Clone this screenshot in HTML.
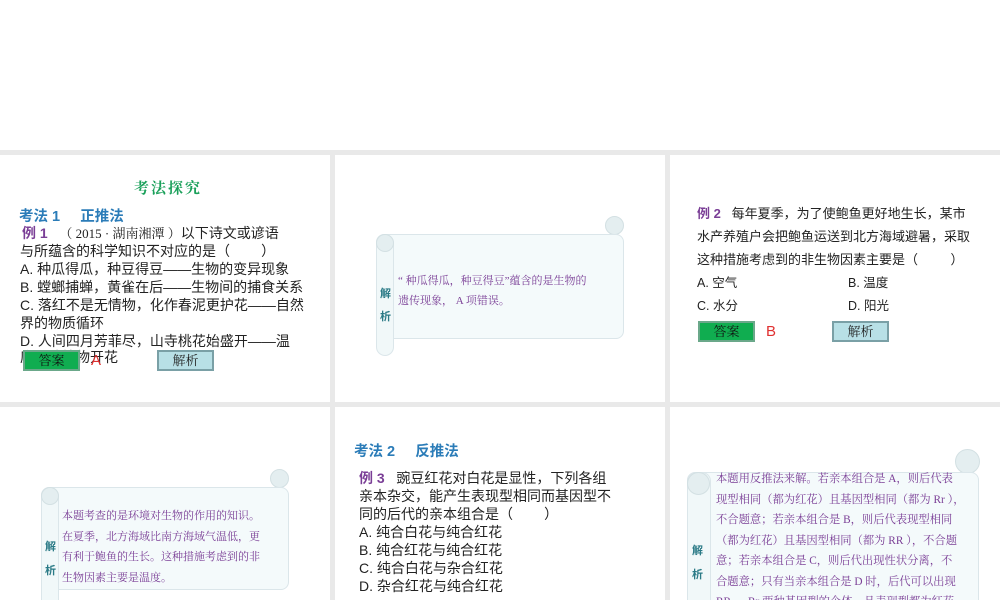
<!DOCTYPE html>
<html><head><meta charset="utf-8"><style>
*{margin:0;padding:0;box-sizing:border-box}
html,body{width:1000px;height:600px;overflow:hidden}
body{background:#fff;position:relative;font-family:"Liberation Sans","Noto Sans CJK SC",sans-serif}
.g{position:absolute;background:#e9e9e9}
.p{position:absolute;overflow:hidden;background:#fff}
.t{position:absolute;font-size:14px;color:#222;line-height:18.5px;white-space:nowrap}
.h{color:#2b7cb8;font-weight:bold;font-size:14.5px}
.ex{color:#7a3e96;font-weight:bold}
.btn{position:absolute;width:57px;height:21px;font-size:13px;text-align:center;line-height:17px;border:2px solid;font-family:"Liberation Serif","Noto Serif CJK SC",serif}
.da{background:#10ad50;border-color:#6ba88a;color:#111}
.jx{background:#b8e0e6;border-color:#7aa0a6;color:#222}
.body{position:absolute;background:#f4fafb;border:1px solid #dbe6ea;border-radius:8px}
.strip{position:absolute;background:#f1f8f9;border:1px solid #dbe6ea;border-radius:9px}
.curl2{position:absolute;background:#e4eef0;border:1px solid #d3e0e3;border-radius:50%}
.lab{position:absolute;color:#2a7a86;font-weight:bold;font-size:11px}
.st{position:absolute;color:#7a3e96;font-family:"Liberation Serif","Noto Serif CJK SC",serif;font-size:11px;white-space:nowrap}
</style></head><body>
<div class="g" style="left:0;top:150px;width:1000px;height:5px"></div>
<div class="g" style="left:330px;top:155px;width:5px;height:445px"></div>
<div class="g" style="left:665px;top:155px;width:5px;height:445px"></div>
<div class="g" style="left:0;top:402px;width:1000px;height:5px"></div>

<div class="p" style="left:0;top:155px;width:330px;height:247px">
<div class="t" style="left:134px;top:25px;color:#1aa05a;font-family:'Liberation Serif','Noto Serif CJK SC',serif;font-size:15px;font-weight:bold;letter-spacing:2px">考法探究</div>
<div class="t h" style="left:19px;top:53px">考法 1 &nbsp;&nbsp;&nbsp; 正推法</div>
<div class="t" style="left:22px;top:69px"><span class="ex">例 1</span>&nbsp;&nbsp;&nbsp;<span style="font-family:'Liberation Serif','Noto Serif CJK SC',serif;font-size:13px">（ 2015 · 湖南湘潭 ）</span>以下诗文或谚语</div>
<div class="t" style="left:20px;top:87px">与所蕴含的科学知识不对应的是（&nbsp;&nbsp;&nbsp;&nbsp;&nbsp;&nbsp;&nbsp;&nbsp;）</div>
<div class="t" style="left:20px;top:105px">A. 种瓜得瓜，种豆得豆——生物的变异现象</div>
<div class="t" style="left:20px;top:123px">B. 螳螂捕蝉，黄雀在后——生物间的捕食关系</div>
<div class="t" style="left:20px;top:141px">C. 落红不是无情物，化作春泥更护花——自然</div>
<div class="t" style="left:20px;top:159px">界的物质循环</div>
<div class="t" style="left:20px;top:177px">D. 人间四月芳菲尽，山寺桃花始盛开——温</div>
<div class="t" style="left:20px;top:193px">度影响植物开花</div>
<div class="btn da" style="left:23px;top:195px">答案</div>
<div class="t" style="left:91px;top:197px;color:#e03030;font-size:15px">A</div>
<div class="btn jx" style="left:157px;top:195px">解析</div>
</div>

<div class="p" style="left:335px;top:155px;width:330px;height:247px">
<div class="curl2" style="left:270px;top:61px;width:19px;height:19px"></div>
<div class="body" style="left:41px;top:79px;width:248px;height:105px"></div>
<div class="strip" style="left:41px;top:79px;width:18px;height:122px"></div>
<div class="curl2" style="left:41px;top:79px;width:18px;height:18px"></div>
<div class="lab" style="left:45px;top:130px">解</div>
<div class="lab" style="left:45px;top:153px">析</div>
<div class="st" style="left:63px;top:117px">“ 种瓜得瓜，种豆得豆”蕴含的是生物的</div>
<div class="st" style="left:63px;top:137px">遗传现象， A 项错误。</div>
</div>

<div class="p" style="left:670px;top:155px;width:330px;height:247px">
<div class="t" style="left:27px;top:50px;font-size:13px"><span class="ex">例 2</span>&nbsp;&nbsp;&nbsp;每年夏季，为了使鲍鱼更好地生长，某市</div>
<div class="t" style="left:27px;top:73px;font-size:13px">水产养殖户会把鲍鱼运送到北方海域避暑，采取</div>
<div class="t" style="left:27px;top:96px;font-size:13px">这种措施考虑到的非生物因素主要是（&nbsp;&nbsp;&nbsp;&nbsp;&nbsp;&nbsp;&nbsp;&nbsp;&nbsp;）</div>
<div class="t" style="left:27px;top:119px;font-size:12.5px">A. 空气</div>
<div class="t" style="left:178px;top:119px;font-size:12.5px">B. 温度</div>
<div class="t" style="left:27px;top:142px;font-size:12.5px">C. 水分</div>
<div class="t" style="left:178px;top:142px;font-size:12.5px">D. 阳光</div>
<div class="btn da" style="left:28px;top:166px">答案</div>
<div class="t" style="left:96px;top:168px;color:#e03030;font-size:15px">B</div>
<div class="btn jx" style="left:162px;top:166px">解析</div>
</div>

<div class="p" style="left:0;top:407px;width:330px;height:193px">
<div class="curl2" style="left:270px;top:62px;width:19px;height:19px"></div>
<div class="body" style="left:41px;top:80px;width:248px;height:103px"></div>
<div class="strip" style="left:41px;top:80px;width:18px;height:130px"></div>
<div class="curl2" style="left:41px;top:80px;width:18px;height:18px"></div>
<div class="lab" style="left:45px;top:131px">解</div>
<div class="lab" style="left:45px;top:155px">析</div>
<div class="st" style="left:62px;top:99px;line-height:20.5px">本题考查的是环境对生物的作用的知识。<br>在夏季，北方海域比南方海域气温低，更<br>有利于鲍鱼的生长。这种措施考虑到的非<br>生物因素主要是温度。</div>
</div>

<div class="p" style="left:335px;top:407px;width:330px;height:193px">
<div class="t h" style="left:19px;top:36px">考法 2 &nbsp;&nbsp;&nbsp; 反推法</div>
<div class="t" style="left:24px;top:62px"><span class="ex">例 3</span>&nbsp;&nbsp;&nbsp;豌豆红花对白花是显性，下列各组</div>
<div class="t" style="left:24px;top:80px">亲本杂交，能产生表现型相同而基因型不</div>
<div class="t" style="left:24px;top:98px">同的后代的亲本组合是（&nbsp;&nbsp;&nbsp;&nbsp;&nbsp;&nbsp;&nbsp;&nbsp;）</div>
<div class="t" style="left:24px;top:116px">A. 纯合白花与纯合红花</div>
<div class="t" style="left:24px;top:134px">B. 纯合红花与纯合红花</div>
<div class="t" style="left:24px;top:152px">C. 纯合白花与杂合红花</div>
<div class="t" style="left:24px;top:170px">D. 杂合红花与纯合红花</div>
</div>

<div class="p" style="left:670px;top:407px;width:330px;height:193px">
<div class="curl2" style="left:285px;top:42px;width:25px;height:25px"></div>
<div class="body" style="left:17px;top:65px;width:292px;height:140px"></div>
<div class="strip" style="left:17px;top:65px;width:24px;height:140px"></div>
<div class="curl2" style="left:17px;top:65px;width:23px;height:23px"></div>
<div class="lab" style="left:22px;top:135px">解</div>
<div class="lab" style="left:22px;top:159px">析</div>
<div class="st" style="left:46px;top:62px;line-height:20.5px;font-size:11.3px">本题用反推法来解。若亲本组合是 A，则后代表<br>现型相同（都为红花）且基因型相同（都为 Rr ），<br>不合题意；若亲本组合是 B，则后代表现型相同<br>（都为红花）且基因型相同（都为 RR ），不合题<br>意；若亲本组合是 C，则后代出现性状分离，不<br>合题意；只有当亲本组合是 D 时，后代可以出现<br>RR 、 Rr 两种基因型的个体，且表现型都为红花。</div>
</div>
</body></html>
